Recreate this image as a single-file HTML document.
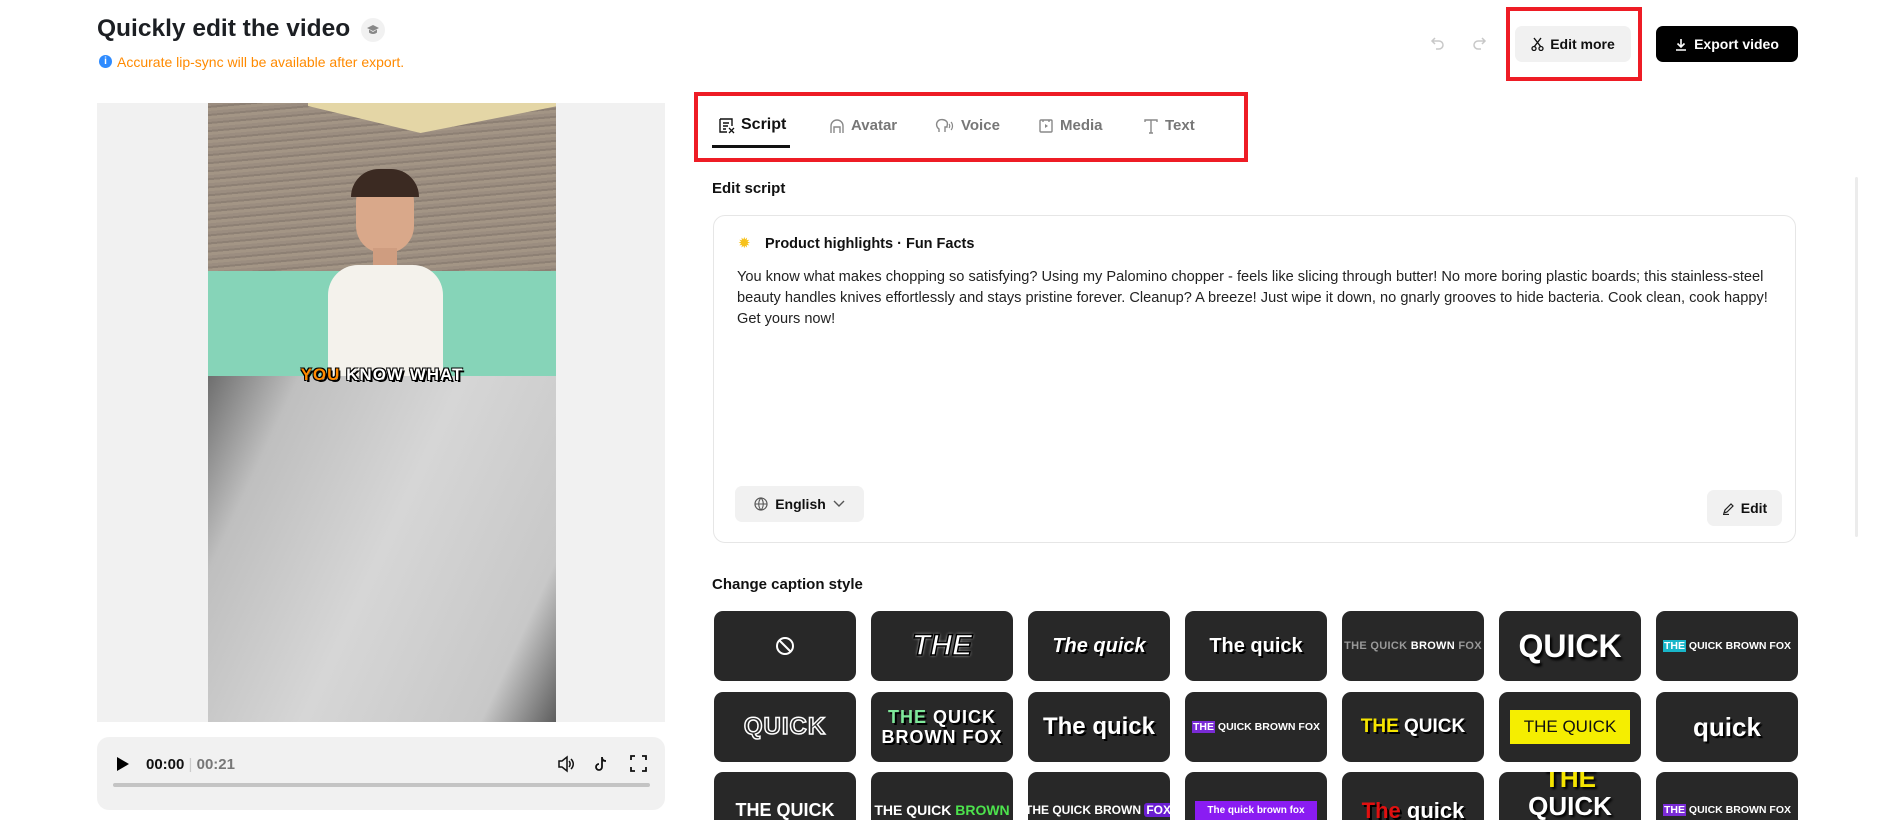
<!DOCTYPE html>
<html><head><meta charset="utf-8"><style>
*{box-sizing:border-box;margin:0;padding:0}
html,body{width:1900px;height:820px;overflow:hidden}
body{background:#fff;font-family:"Liberation Sans",sans-serif;color:#111;position:relative}
#w{position:absolute;left:0;top:0;width:1900px;height:820px;overflow:hidden}
.a{position:absolute}
.tile{position:absolute;width:142px;height:70px;background:#282828;border-radius:9px;display:flex;align-items:center;justify-content:center;color:#fff;font-weight:bold;overflow:hidden;white-space:nowrap}
.tab{position:absolute;top:115px;font-size:15px;font-weight:bold;color:#777;display:flex;align-items:center;gap:6px}
</style></head><body><div id="w">
<div class="a" style="left:97px;top:15px;font-size:24.5px;font-weight:bold;color:#1c1f23">Quickly edit the video</div>
<div class="a" style="left:361px;top:18px;width:24px;height:24px;border-radius:12px;background:#f1f1f1;display:flex;align-items:center;justify-content:center"><svg width="14" height="12" viewBox="0 0 14 12"><path d="M7 1L1 4l6 3 6-3z M3 5.5v3c2 2 6 2 8 0v-3L7 8z" fill="#888"/></svg></div>
<div class="a" style="left:99px;top:55px;width:13px;height:13px;border-radius:7px;background:#2e8bff;color:#fff;font-size:10px;font-weight:bold;text-align:center;line-height:13px">i</div>
<div class="a" style="left:117px;top:54px;font-size:14px;color:#ff8a00">Accurate lip-sync will be available after export.</div>

<svg class="a" style="left:1430px;top:35px" width="16" height="16" viewBox="0 0 16 16"><path d="M5 3L2 6l3 3M2 6h7a4 4 0 010 8H6" fill="none" stroke="#c8c8c8" stroke-width="1.5"/></svg>
<svg class="a" style="left:1471px;top:35px" width="16" height="16" viewBox="0 0 16 16"><path d="M11 3l3 3-3 3M14 6H7a4 4 0 000 8h3" fill="none" stroke="#c8c8c8" stroke-width="1.5"/></svg>
<div class="a" style="left:1506px;top:7px;width:136px;height:74px;border:4px solid #ee1c25"></div>
<div class="a" style="left:1515px;top:26px;width:116px;height:36px;background:#f1f1f1;border-radius:7px;display:flex;align-items:center;justify-content:center;gap:6px;font-size:14px;font-weight:bold"><svg width="13" height="14" viewBox="0 0 13 14"><path d="M3 1l7 9M10 1L3 10" stroke="#111" stroke-width="1.4"/><circle cx="3" cy="11.5" r="2" fill="none" stroke="#111" stroke-width="1.3"/><circle cx="10" cy="11.5" r="2" fill="none" stroke="#111" stroke-width="1.3"/></svg>Edit more</div>
<div class="a" style="left:1656px;top:26px;width:142px;height:36px;background:#000;border-radius:7px;display:flex;align-items:center;justify-content:center;gap:7px;font-size:14px;font-weight:bold;color:#fff"><svg width="12" height="13" viewBox="0 0 12 13"><path d="M6 1v8M2.5 5.5L6 9l3.5-3.5M1 12h10" stroke="#fff" stroke-width="1.6" fill="none"/></svg>Export video</div>

<!-- video -->
<div class="a" style="left:97px;top:103px;width:568px;height:619px;background:#f1f1f1"></div>
<div class="a" style="left:208px;top:103px;width:348px;height:619px;overflow:hidden;background:#c9c9c9">
 <div class="a" style="left:0;top:0;width:348px;height:205px;background:repeating-linear-gradient(175deg,#9b8d80 0 3px,#8d8074 3px 5px,#a39585 5px 8px)"></div>
 <div class="a" style="left:100px;top:0;width:250px;height:30px;background:#e4d6a6;clip-path:polygon(0 0,100% 0,100% 10%,45% 100%,0 10%)"></div>
 <div class="a" style="left:0;top:168px;width:348px;height:106px;background:#86d4b8"></div>
 <div class="a" style="left:148px;top:70px;width:58px;height:80px;border-radius:30px 30px 28px 28px;background:#d9a88a"></div>
 <div class="a" style="left:143px;top:66px;width:68px;height:28px;border-radius:34px 34px 0 0;background:#3b2a22"></div>
 <div class="a" style="left:165px;top:145px;width:24px;height:25px;background:#cf9d80"></div>
 <div class="a" style="left:120px;top:162px;width:115px;height:112px;border-radius:30px 30px 0 0;background:#f4f2ec"></div>
 <div class="a" style="left:0;top:273px;width:348px;height:348px;background:linear-gradient(115deg,#6e6e6e 0%,#bfbfbf 18%,#d6d6d6 50%,#c8c8c8 85%,#5c5c5c 100%)"></div>
 <div class="a" style="left:0;top:262px;width:348px;text-align:center;font-size:17px;font-weight:bold;color:#fff;letter-spacing:1px;text-shadow:2px 2px 0 #000,-1px -1px 0 #000,1px -1px 0 #000,-1px 1px 0 #000"><span style="color:#ff8a00">YOU</span> KNOW WHAT</div>
</div>
<div class="a" style="left:97px;top:737px;width:568px;height:73px;background:#f1f1f1;border-radius:12px"></div>
<svg class="a" style="left:116px;top:756px" width="14" height="16" viewBox="0 0 14 16"><path d="M1 1l12 7-12 7z" fill="#000"/></svg>
<div class="a" style="left:146px;top:756px;font-size:15px;font-weight:bold">00:00 <span style="color:#ccc;font-weight:normal">|</span> <span style="color:#777">00:21</span></div>
<svg class="a" style="left:557px;top:755px" width="18" height="18" viewBox="0 0 18 18"><path d="M2 6h3l5-4v14l-5-4H2z" fill="none" stroke="#111" stroke-width="1.5"/><path d="M12 6c1.5 1.5 1.5 4.5 0 6M14 4c3 3 3 7 0 10" fill="none" stroke="#111" stroke-width="1.5"/></svg>
<svg class="a" style="left:593px;top:755px" width="18" height="18" viewBox="0 0 18 18"><path d="M9 2v10a3 3 0 11-3-3M9 2c0 3 2 4 4 4" fill="none" stroke="#111" stroke-width="1.8"/></svg>
<svg class="a" style="left:630px;top:755px" width="17" height="17" viewBox="0 0 17 17"><path d="M1 5V1h4M12 1h4v4M16 12v4h-4M5 16H1v-4" fill="none" stroke="#111" stroke-width="1.8"/></svg>
<div class="a" style="left:113px;top:783px;width:537px;height:4px;border-radius:2px;background:#c4c4c4"></div>

<!-- tabs -->
<div class="a" style="left:694px;top:92px;width:554px;height:70px;border:4px solid #ee1c25"></div>
<div class="tab" style="left:718px;top:116px;color:#111;font-size:16px"><svg width="17" height="17" viewBox="0 0 17 17"><path d="M2 2h12v7M2 2v13h7M5 6h6M5 9h5M5 12h3" fill="none" stroke="#111" stroke-width="1.4"/><path d="M11 11l5 5M16 11l-5 5" stroke="#111" stroke-width="1.3"/></svg>Script</div>
<div class="a" style="left:712px;top:145px;width:78px;height:3px;background:#111"></div>
<div class="tab" style="left:829px;top:117px"><svg width="16" height="16" viewBox="0 0 16 16"><path d="M2 15V8a6 6 0 0112 0v7M5 15V9h6v6" fill="none" stroke="#888" stroke-width="1.4"/></svg>Avatar</div>
<div class="tab" style="left:935px;top:117px"><svg width="20" height="16" viewBox="0 0 20 16"><path d="M4 14v-3C1 9 1 5 3 3s7-2 9 1c1 2 0 3 0 5h-2v5" fill="none" stroke="#888" stroke-width="1.4"/><path d="M14 6c1 1 1 3 0 4M16 4c2 2 2 6 0 8" fill="none" stroke="#888" stroke-width="1.2"/></svg>Voice</div>
<div class="tab" style="left:1038px;top:117px"><svg width="16" height="16" viewBox="0 0 16 16"><rect x="2" y="2" width="12" height="12" rx="1" fill="none" stroke="#888" stroke-width="1.4"/><path d="M7 6l3 2-3 2z" fill="#888"/><path d="M5 2v2M11 2v2" stroke="#888" stroke-width="1.4"/></svg>Media</div>
<div class="tab" style="left:1143px;top:117px"><svg width="16" height="16" viewBox="0 0 16 16"><path d="M2 4V2h12v2M8 2v13M6 15h4" fill="none" stroke="#888" stroke-width="1.4"/></svg>Text</div>

<div class="a" style="left:712px;top:180px;font-size:15px;font-weight:bold">Edit script</div>
<div class="a" style="left:713px;top:215px;width:1083px;height:328px;border:1px solid #e6e6e6;border-radius:12px"></div>
<div class="a" style="left:738px;top:234px;font-size:15px;color:#f7c21b">✹</div>
<div class="a" style="left:765px;top:236px;font-size:14.5px;font-weight:bold">Product highlights · Fun Facts</div>
<div class="a" style="left:737px;top:267px;font-size:14.6px;line-height:21px;color:#222;white-space:nowrap">You know what makes chopping so satisfying? Using my Palomino chopper - feels like slicing through butter! No more boring plastic boards; this stainless-steel<br>beauty handles knives effortlessly and stays pristine forever. Cleanup? A breeze! Just wipe it down, no gnarly grooves to hide bacteria. Cook clean, cook happy!<br>Get yours now!</div>
<div class="a" style="left:735px;top:486px;width:129px;height:36px;background:#f1f1f1;border-radius:7px;display:flex;align-items:center;justify-content:center;gap:7px;font-size:14px;font-weight:bold"><svg width="14" height="14" viewBox="0 0 14 14"><circle cx="7" cy="7" r="6" fill="none" stroke="#555" stroke-width="1.2"/><path d="M1 7h12M7 1c-3 3-3 9 0 12M7 1c3 3 3 9 0 12" fill="none" stroke="#555" stroke-width="1.1"/></svg>English<svg width="12" height="8" viewBox="0 0 12 8"><path d="M1 1l5 5 5-5" fill="none" stroke="#555" stroke-width="1.4"/></svg></div>
<div class="a" style="left:1707px;top:490px;width:75px;height:36px;background:#f1f1f1;border-radius:7px;display:flex;align-items:center;justify-content:center;gap:6px;font-size:14px;font-weight:bold"><svg width="13" height="13" viewBox="0 0 13 13"><path d="M2 11l1-3 6-6 2 2-6 6zM1 12.5h6" fill="none" stroke="#222" stroke-width="1.2"/></svg>Edit</div>
<div class="a" style="left:1855px;top:177px;width:3px;height:360px;background:#ececec;border-radius:2px"></div>

<div class="a" style="left:712px;top:576px;font-size:15px;font-weight:bold">Change caption style</div>

<!-- row 1 -->
<div class="tile" style="left:714px;top:611px"><svg width="20" height="20" viewBox="0 0 20 20"><circle cx="10" cy="10" r="8" fill="none" stroke="#fff" stroke-width="2"/><path d="M4.5 4.5l11 11" stroke="#fff" stroke-width="2"/></svg></div>
<div class="tile" style="left:871px;top:611px;font-size:30px;font-style:italic;font-family:'Liberation Sans Narrow','Liberation Sans',sans-serif;color:#fff;-webkit-text-stroke:1.5px #000;text-shadow:0 0 3px #fff">THE</div>
<div class="tile" style="left:1028px;top:611px;font-size:20px;font-style:italic;text-shadow:2px 2px 0 #000">The quick</div>
<div class="tile" style="left:1185px;top:611px;font-size:20px;text-shadow:2px 2px 0 #000">The quick</div>
<div class="tile" style="left:1342px;top:611px;font-size:11px;color:#999;letter-spacing:.3px">THE QUICK&nbsp;<span style="color:#fff">BROWN</span>&nbsp;FOX</div>
<div class="tile" style="left:1499px;top:611px;font-size:32px;font-family:'Liberation Sans Narrow','Liberation Sans',sans-serif;text-shadow:2px 3px 2px #000">QUICK</div>
<div class="tile" style="left:1656px;top:611px;font-size:10.5px"><span style="background:#19b6c9;padding:0 1px">THE</span>&nbsp;QUICK BROWN FOX</div>
<!-- row 2 -->
<div class="tile" style="left:714px;top:692px;font-size:24px;color:#282828;-webkit-text-stroke:1.5px #fff;letter-spacing:1px">QUICK</div>
<div class="tile" style="left:871px;top:692px;font-size:18px;line-height:20px;text-align:center;letter-spacing:1px;text-shadow:2px 2px 0 #000"><div><span style="color:#7ee89a">THE</span> QUICK<br>BROWN FOX</div></div>
<div class="tile" style="left:1028px;top:692px;font-size:24px;font-family:'Liberation Sans Narrow','Liberation Sans',sans-serif;text-shadow:2px 2px 0 #000">The quick</div>
<div class="tile" style="left:1185px;top:692px;font-size:10.5px"><span style="background:#7a2bd6;padding:0 1px">THE</span>&nbsp;QUICK BROWN FOX</div>
<div class="tile" style="left:1342px;top:692px;font-size:19px;text-shadow:2px 2px 0 #000"><span style="color:#f5e400">THE</span>&nbsp;QUICK</div>
<div class="tile" style="left:1499px;top:692px"><div style="background:#f5ee00;color:#111;font-weight:normal;font-family:'Liberation Sans Narrow','Liberation Sans',sans-serif;font-size:17px;padding:7px 14px">THE QUICK</div></div>
<div class="tile" style="left:1656px;top:692px;font-size:26px;text-shadow:2px 2px 1px #000">quick</div>
<!-- row 3 -->
<div class="tile" style="left:714px;top:772px;font-size:18px;padding-top:6px">THE QUICK</div>
<div class="tile" style="left:871px;top:772px;font-size:14px;font-family:'Liberation Sans Narrow','Liberation Sans',sans-serif;padding-top:6px">THE QUICK&nbsp;<span style="color:#4de34d">BROWN</span></div>
<div class="tile" style="left:1028px;top:772px;font-size:12px;font-family:'Liberation Sans Narrow','Liberation Sans',sans-serif;padding-top:6px">THE QUICK BROWN&nbsp;<span style="background:#6a1ed1;border-radius:3px;padding:0 2px">FOX</span></div>
<div class="tile" style="left:1185px;top:772px;font-size:10px;padding-top:6px"><div style="background:#8a1cf2;padding:4px 12px">The quick brown fox</div></div>
<div class="tile" style="left:1342px;top:772px;font-size:22px;font-family:'Liberation Sans Narrow','Liberation Sans',sans-serif;text-shadow:2px 2px 0 #000;padding-top:8px"><span style="color:#e01010">The</span>&nbsp;quick</div>
<div class="tile" style="left:1499px;top:772px;font-size:26px;line-height:28px;text-align:center;text-shadow:2px 2px 2px #000;align-items:flex-start"><div style="margin-top:-8px"><span style="color:#f5e400">THE</span><br>QUICK</div></div>
<div class="tile" style="left:1656px;top:772px;font-size:10.5px;padding-top:6px"><span style="background:#7a2bd6;padding:0 1px">THE</span>&nbsp;QUICK BROWN FOX</div>
</div></body></html>
